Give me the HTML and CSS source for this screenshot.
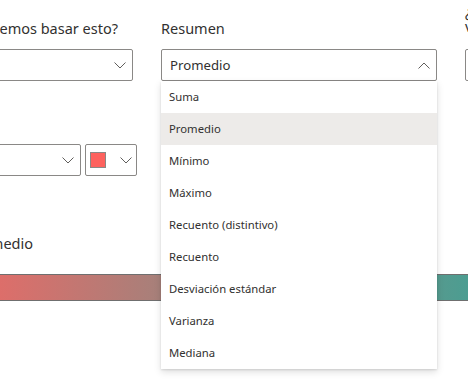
FILE: index.html
```html
<!DOCTYPE html>
<html lang="es">
<head>
<meta charset="utf-8">
<link rel="stylesheet" href="styles.css">
</head>
<body>
<div class="panel">
  <div class="fields">
    <div class="field">
      <div class="label clipped">¿En qué debemos basar esto?</div>
      <div class="dropdown">
        <span class="value"></span>
        <svg class="chev" width="12" height="7" viewBox="0 0 12 7"><path d="M0.5 0.5 L6 6 L11.5 0.5" /></svg>
      </div>
    </div>
    <div class="field">
      <div class="label">Resumen</div>
      <div class="dropdown open">
        <span class="value">Promedio</span>
        <svg class="chev" width="12" height="7" viewBox="0 0 12 7"><path d="M0.5 6.5 L6 1 L11.5 6.5" /></svg>
      </div>
    </div>
    <div class="field">
      <div class="label two">¿Cómo<br>valor</div>
      <div class="dropdown">
        <span class="value"></span>
      </div>
    </div>
  </div>

  <div class="color-row">
    <div class="dropdown wide">
      <span class="value"></span>
      <svg class="chev" width="12" height="7" viewBox="0 0 12 7"><path d="M0.5 0.5 L6 6 L11.5 0.5" /></svg>
    </div>
    <div class="dropdown picker">
      <span class="swatch"></span>
      <svg class="chev" width="12" height="7" viewBox="0 0 12 7"><path d="M0.5 0.5 L6 6 L11.5 0.5" /></svg>
    </div>
  </div>

  <div class="legend">Promedio</div>
</div>

<div class="gradient"></div>

<ul class="menu">
  <li>Suma</li>
  <li class="selected">Promedio</li>
  <li>Mínimo</li>
  <li>Máximo</li>
  <li>Recuento (distintivo)</li>
  <li>Recuento</li>
  <li>Desviación estándar</li>
  <li>Varianza</li>
  <li>Mediana</li>
</ul>
</body>
</html>
```

FILE: styles.css
```css
html, body {
  margin: 0;
  padding: 0;
}

body {
  width: 468px;
  height: 385px;
  overflow: hidden;
  position: relative;
  background: #ffffff;
  font-family: "Noto Sans", "Open Sans", sans-serif;
  color: #323130;
}

.panel {
  margin-left: -143px;
  padding-top: 18px;
}

.fields {
  display: flex;
  gap: 28px;
  align-items: flex-start;
}

.field {
  flex: 0 0 276px;
  display: flex;
  flex-direction: column;
  gap: 11px;
}

.label {
  font-size: 14.5px;
  line-height: 20px;
  white-space: nowrap;
}

.label.clipped {
  text-align: right;
  padding-right: 15px;
}

.label.two {
  line-height: 15px;
  margin-top: -14px;
  margin-bottom: 4px;
}

.dropdown {
  box-sizing: border-box;
  height: 32px;
  border: 1px solid #8a8886;
  border-radius: 2px;
  display: flex;
  align-items: center;
  justify-content: space-between;
  padding: 0 6px 0 8px;
  background: #ffffff;
}

.value {
  font-size: 13.2px;
  line-height: 20px;
  color: #323130;
}

.chev path {
  fill: none;
  stroke: #605e5c;
  stroke-width: 1;
}

.color-row {
  margin-top: 63px;
  display: flex;
  gap: 4px;
}

.dropdown.wide {
  width: 224px;
}

.dropdown.picker {
  width: 52px;
  padding: 0 4px 0 4px;
}

.swatch {
  box-sizing: border-box;
  width: 16px;
  height: 16px;
  background: #fd625e;
  border: 1px solid #8a8886;
}

.legend {
  margin-top: 57px;
  font-size: 14.5px;
  line-height: 20px;
  width: 176px;
  text-align: right;
}

.gradient {
  box-sizing: border-box;
  margin-top: 21px;
  height: 27px;
  border-top: 1px solid #6f6f6f;
  border-bottom: 1px solid #6f6f6f;
  background: linear-gradient(to right, #dd6e6a 0%, #a7807a 34%, #4c9d91 100%);
}

.menu {
  position: absolute;
  left: 161px;
  top: 81px;
  width: 276px;
  margin: 0;
  padding: 0;
  list-style: none;
  background: #ffffff;
  box-shadow: 0 3.2px 7.2px 0 rgba(0, 0, 0, 0.132), 0 0.6px 1.8px 0 rgba(0, 0, 0, 0.108);
}

.menu li {
  height: 32px;
  line-height: 32px;
  padding-left: 8px;
  font-size: 11.3px;
  color: #323130;
}

.menu li.selected {
  background: #edebe9;
}
```
